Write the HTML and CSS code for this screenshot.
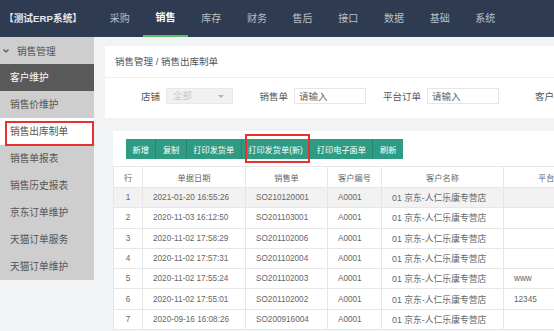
FILE: index.html
```html
<!DOCTYPE html>
<html lang="zh-CN">
<head>
    <meta charset="UTF-8">
    <title>销售出库制单</title>
    <link rel="stylesheet" href="styles.css">
</head>
<body>
    <div class="topbar">
        <div class="logo">【测试ERP系统】</div>
        <div class="nav-item">采购</div>
        <div class="nav-item active">销售</div>
        <div class="nav-item">库存</div>
        <div class="nav-item">财务</div>
        <div class="nav-item">售后</div>
        <div class="nav-item">接口</div>
        <div class="nav-item">数据</div>
        <div class="nav-item">基础</div>
        <div class="nav-item">系统</div>
    </div>
    <div class="layout">
        <div class="sidebar">
            <div class="menu-title">
                <svg class="chevron" width="6" height="4" viewBox="0 0 6 4"><polyline points="0.5,0.5 3,3 5.5,0.5" fill="none" stroke="#555" stroke-width="1.2"/></svg>
                销售管理
            </div>
            <div class="menu-item active">客户维护</div>
            <div class="menu-item">销售价维护</div>
            <div class="menu-item current">销售出库制单</div>
            <div class="menu-item">销售单报表</div>
            <div class="menu-item">销售历史报表</div>
            <div class="menu-item">京东订单维护</div>
            <div class="menu-item">天猫订单服务</div>
            <div class="menu-item">天猫订单维护</div>
        </div>
        <div class="main">
            <div class="search-card">
                <div class="breadcrumb">销售管理 / 销售出库制单</div>
                <div class="filters">
                    <div class="filter-group">
                        <span class="filter-label">店铺</span>
                        <div class="select">全部<span class="caret"></span></div>
                    </div>
                    <div class="filter-group">
                        <span class="filter-label">销售单</span>
                        <input class="input" type="text" placeholder="请输入">
                    </div>
                    <div class="filter-group">
                        <span class="filter-label">平台订单</span>
                        <input class="input" type="text" placeholder="请输入">
                    </div>
                    <div class="filter-group">
                        <span class="filter-label">客户</span>
                        <input class="input" type="text" placeholder="请输入">
                    </div>
                </div>
            </div>
            <div class="list-card">
                <div class="toolbar">
                    <button class="btn">新增</button>
                    <button class="btn">复制</button>
                    <button class="btn">打印发货单</button>
                    <button class="btn marked">打印发货单(新)</button>
                    <button class="btn">打印电子面单</button>
                    <button class="btn">刷新</button>
                </div>
                <table class="grid">
                    <colgroup>
                        <col style="width:29px">
                        <col style="width:103px">
                        <col style="width:82px">
                        <col style="width:54px">
                        <col style="width:122px">
                        <col style="width:90px">
                    </colgroup>
                    <thead>
                        <tr>
                            <th>行</th>
                            <th>单据日期</th>
                            <th>销售单</th>
                            <th>客户编号</th>
                            <th>客户名称</th>
                            <th class="left">平台订单</th>
                        </tr>
                    </thead>
                    <tbody>
                        <tr class="selected">
                            <td class="num">1</td><td>2021-01-20 16:55:26</td><td>SO210120001</td><td>A0001</td><td class="name">01 京东-人仁乐康专营店</td><td></td>
                        </tr>
                        <tr>
                            <td class="num">2</td><td>2020-11-03 16:12:50</td><td>SO201103001</td><td>A0001</td><td class="name">01 京东-人仁乐康专营店</td><td></td>
                        </tr>
                        <tr>
                            <td class="num">3</td><td>2020-11-02 17:58:29</td><td>SO201102006</td><td>A0001</td><td class="name">01 京东-人仁乐康专营店</td><td></td>
                        </tr>
                        <tr>
                            <td class="num">4</td><td>2020-11-02 17:57:31</td><td>SO201102004</td><td>A0001</td><td class="name">01 京东-人仁乐康专营店</td><td></td>
                        </tr>
                        <tr>
                            <td class="num">5</td><td>2020-11-02 17:55:24</td><td>SO201102003</td><td>A0001</td><td class="name">01 京东-人仁乐康专营店</td><td>www</td>
                        </tr>
                        <tr>
                            <td class="num">6</td><td>2020-11-02 17:55:01</td><td>SO201102002</td><td>A0001</td><td class="name">01 京东-人仁乐康专营店</td><td>12345</td>
                        </tr>
                        <tr>
                            <td class="num">7</td><td>2020-09-16 16:08:26</td><td>SO200916004</td><td>A0001</td><td class="name">01 京东-人仁乐康专营店</td><td></td>
                        </tr>
                    </tbody>
                </table>
            </div>
        </div>
    </div>
</body>
</html>
```
FILE: styles.css
```css
body {
    margin: 0;
    width: 554px;
    height: 331px;
    overflow: hidden;
    font-family: "Liberation Sans", "Noto Sans CJK SC", sans-serif;
    background: #f2f3f5;
    color: #555;
}
.topbar {
    display: flex;
    height: 37px;
    background: #2f3b50;
}
.logo {
    width: 93px;
    padding-left: 4px;
    line-height: 37px;
    font-size: 9.7px;
    font-weight: bold;
    color: #e4e7ec;
    white-space: nowrap;
}
.nav-item {
    width: 45.7px;
    box-sizing: border-box;
    text-align: center;
    line-height: 37px;
    font-size: 10px;
    color: #b9c0cb;
}
.nav-item.active {
    color: #fff;
    font-weight: bold;
    border-bottom: 2px solid #5cc068;
    line-height: 35px;
}
.layout {
    display: flex;
    height: 294px;
}
.sidebar {
    width: 94px;
    flex-shrink: 0;
    align-self: flex-start;
    background: #cecece;
    font-size: 9.7px;
}
.menu-title {
    display: flex;
    align-items: center;
    height: 27px;
    padding-left: 3px;
    color: #555;
}
.chevron {
    margin-right: 8px;
}
.menu-item {
    position: relative;
    height: 27px;
    line-height: 27px;
    padding-left: 10px;
    color: #555;
}
.menu-item.active {
    background: #5a5a5a;
    color: #fff;
}
.menu-item.current {
    background: #fff;
}
.menu-item.current::after {
    content: "";
    position: absolute;
    left: 5px;
    top: 3px;
    right: 0;
    bottom: -1px;
    border: 2px solid #e8312f;
}
.main {
    flex: 1;
    min-width: 0;
    padding: 9px 0 0 11px;
}
.search-card {
    background: #fff;
}
.breadcrumb {
    height: 31px;
    line-height: 31px;
    padding-left: 10px;
    font-size: 9.5px;
    color: #555;
    border-bottom: 1px solid #efefef;
}
.filters {
    display: flex;
    padding: 10px 0 14px;
    white-space: nowrap;
}
.filter-group {
    display: flex;
    align-items: center;
    flex-shrink: 0;
}
.filter-label {
    width: 55px;
    padding-right: 6px;
    text-align: right;
    font-size: 9.5px;
    color: #555;
}
.select {
    position: relative;
    width: 67px;
    height: 16px;
    box-sizing: border-box;
    padding-left: 6px;
    line-height: 14px;
    font-size: 9.5px;
    color: #c9c9c9;
    background: #f1f1f1;
    border: 1px solid #e8e8e8;
}
.caret {
    position: absolute;
    right: 8px;
    top: 6px;
    border-left: 3px solid transparent;
    border-right: 3px solid transparent;
    border-top: 3px solid #b5b5b5;
}
.input {
    width: 72px;
    height: 16px;
    box-sizing: border-box;
    margin: 0;
    padding: 0 4px;
    font-family: inherit;
    font-size: 9.5px;
    border: 1px solid #e6e6e6;
    outline: none;
}
.input::placeholder {
    color: #666;
}
.list-card {
    margin: 13px 0 0 8px;
    background: #fff;
}
.toolbar {
    display: flex;
    padding: 8px 0 7px 13px;
}
.btn {
    position: relative;
    height: 20px;
    margin: 0;
    padding: 0 6.5px;
    font-family: inherit;
    font-size: 8.2px;
    color: #fff;
    background: #2f9b83;
    border: none;
    border-left: 1px solid #268670;
    white-space: nowrap;
}
.btn:first-child {
    border-left: none;
}
.btn.marked::after {
    content: "";
    position: absolute;
    left: 3px;
    right: -1px;
    top: -5px;
    bottom: -4px;
    border: 2px solid #e8312f;
}
.grid {
    width: 480px;
    table-layout: fixed;
    border-collapse: collapse;
    font-size: 8.2px;
    color: #666;
}
.grid th,
.grid td {
    height: 19.3px;
    padding: 0 0 0 10px;
    border: 1px solid #e6e6e6;
    white-space: nowrap;
    overflow: hidden;
}
.grid th {
    height: 20px;
    padding: 0;
    font-weight: normal;
    text-align: center;
    color: #666;
}
.grid th.left {
    text-align: left;
    padding-left: 34px;
}
.grid td.num {
    padding: 0;
    text-align: center;
}
.grid td.name {
    font-size: 8.8px;
}
.grid tr.selected td {
    background: #f2f2f2;
}
```
